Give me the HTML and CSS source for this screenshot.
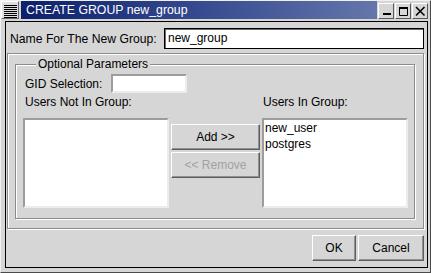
FILE: index.html
```html
<!DOCTYPE html>
<html>
<head>
<meta charset="utf-8">
<title>CREATE GROUP new_group</title>
<link rel="stylesheet" href="styles.css">
</head>
<body>
<div class="window">
  <div class="titlebar">
    <div class="menu-btn">
      <svg width="16" height="16" viewBox="0 0 16 16">
        <g stroke="#000" stroke-width="1">
          <line x1="2" y1="3.5" x2="15" y2="3.5"/>
          <line x1="2" y1="5.5" x2="15" y2="5.5"/>
          <line x1="2" y1="7.5" x2="15" y2="7.5"/>
          <line x1="2" y1="9.5" x2="15" y2="9.5"/>
          <line x1="2" y1="11.5" x2="15" y2="11.5"/>
          <line x1="2" y1="13.5" x2="15" y2="13.5"/>
          <line x1="2" y1="15.5" x2="15" y2="15.5"/>
        </g>
      </svg>
    </div>
    <div class="title">CREATE GROUP new_group</div>
    <div class="wbtns">
      <div class="wbtn">
        <svg width="14" height="14" viewBox="0 0 14 14"><rect x="4" y="9" width="8" height="2" fill="#000"/></svg>
      </div>
      <div class="wbtn">
        <svg width="14" height="14" viewBox="0 0 14 14"><path d="M3.5 3.5h8v8h-8z" fill="none" stroke="#000"/><rect x="3" y="3" width="9" height="2" fill="#000"/></svg>
      </div>
      <div class="wbtn">
        <svg width="14" height="14" viewBox="0 0 14 14"><path d="M3 3L11.5 11.5M11.5 3L3 11.5" stroke="#000" stroke-width="1.6"/></svg>
      </div>
    </div>
  </div>
  <div class="client">
    <div class="name-row">
      <span class="name-label">Name For The New Group:</span>
      <div class="entry name-entry">new_group</div>
    </div>
    <div class="main-box">
      <div class="frame">
        <div class="legend">Optional Parameters</div>
        <div class="gid-row">
          <span class="gid-label">GID Selection:</span>
          <div class="entry gid-entry"></div>
        </div>
        <div class="lists">
          <div class="col-label left-label">Users Not In Group:</div>
          <div></div>
          <div class="col-label right-label">Users In Group:</div>
          <div class="list"></div>
          <div class="mid">
            <div class="btn">Add &gt;&gt;</div>
            <div class="btn disabled">&lt;&lt; Remove</div>
          </div>
          <div class="list">
            <div class="item">new_user</div>
            <div class="item">postgres</div>
          </div>
        </div>
      </div>
    </div>
    <div class="action-area">
      <div class="btn ok">OK</div>
      <div class="btn cancel">Cancel</div>
    </div>
  </div>
</div>
</body>
</html>
```
FILE: styles.css
```css
* { box-sizing: border-box; }
html, body { margin: 0; padding: 0; }
body {
  width: 431px;
  height: 273px;
  overflow: hidden;
  background: #d6d6d6;
  font-family: "Liberation Sans", Arial, sans-serif;
  font-size: 12px;
  line-height: 14px;
  color: #000;
}
.window {
  width: 431px;
  height: 273px;
  display: flex;
  flex-direction: column;
  background: #d6d6d6;
  border: 1px solid;
  border-color: #f0f0f0 #4a4a4a #4a4a4a #f0f0f0;
}
.titlebar {
  height: 18px;
  display: flex;
  margin-right: 2px;
  flex: none;
}
.menu-btn {
  width: 18px;
  height: 18px;
  background: #dedede;
  border: 1px solid;
  border-color: #ffffff #6a6a6a #6a6a6a #ffffff;
  display: flex;
}
.title {
  flex: 1;
  margin-left: 2px;
  margin-right: 1px;
  background: linear-gradient(90deg, #0b1f6c 0%, #3a4f92 55%, #6476ab 100%);
  color: #fff;
  padding-left: 5px;
  padding-top: 2px;
  font-size: 12.3px;
  white-space: nowrap;
}
.wbtns {
  display: flex;
  gap: 1px;
  padding-top: 2px;
}
.wbtn {
  width: 16px;
  height: 16px;
  border: 1px solid;
  border-color: #ffffff #5a5a5a #5a5a5a #ffffff;
  background: #d6d6d6;
  display: flex;
}
.client {
  flex: 1;
  margin: 2px 2px 4px 4px;
  border: 1px solid #000;
  display: flex;
  flex-direction: column;
}
.name-row {
  height: 31px;
  flex: none;
  display: flex;
  align-items: center;
  padding: 6px 3px 4px 4px;
}
.name-label { flex: 1; white-space: nowrap; font-size: 12.2px; }
.entry { background: #fff; white-space: nowrap; }
.name-entry {
  width: 260px;
  height: 21px;
  border: 1px solid #000;
  box-shadow: inset 1px 1px 0 #6a6a6a;
  padding: 0 3px;
  line-height: 19px;
}
.main-box {
  height: 176px;
  flex: none;
  margin: 0 3px 0 1px;
  border: 1px solid #8c8c8c;
  box-shadow: inset 1px 1px 0 #fff, 1px 1px 0 #fff;
  padding: 10px 8px 9px 7px;
}
.frame {
  height: 155px;
  border: 1px solid #8c8c8c;
  box-shadow: inset 1px 1px 0 #fff, 1px 1px 0 #fff;
  padding: 0 6px 10px 7px;
}
.legend {
  width: max-content;
  margin: -8px 0 0 13px;
  padding: 0 2px;
  background: #d6d6d6;
  line-height: 14px;
  white-space: nowrap;
}
.gid-row {
  margin-top: 3px;
  height: 19px;
  display: flex;
  align-items: center;
}
.gid-label { width: 88px; padding-left: 2px; white-space: nowrap; }
.gid-entry {
  width: 76px;
  height: 19px;
  border: 2px solid;
  border-color: #9c9c9c #ececec #ececec #9c9c9c;
}
.lists {
  margin-top: 2px;
  display: grid;
  grid-template-columns: 146px 89px 146px;
  column-gap: 2px;
  row-gap: 9px;
}
.col-label { height: 14px; white-space: nowrap; }
.left-label { padding-left: 2px; }
.right-label { padding-left: 1px; }
.list {
  height: 90px;
  background: #fff;
  border: 2px solid;
  border-color: #9c9c9c #ececec #ececec #9c9c9c;
  padding-left: 1px;
}
.item { line-height: 16px; }
.mid {
  padding-top: 6px;
  display: flex;
  flex-direction: column;
  gap: 2px;
}
.btn {
  height: 26px;
  border: 1px solid;
  border-color: #ffffff #5e5e5e #5e5e5e #ffffff;
  box-shadow: inset -1px -1px 0 #909090;
  background: #d6d6d6;
  display: flex;
  align-items: center;
  justify-content: center;
  white-space: nowrap;
}
.btn.disabled { color: #a2a2a2; }
.action-area {
  flex: 1;
  display: flex;
  justify-content: flex-end;
  align-items: flex-start;
  padding: 6px 3px 0 0;
  gap: 2px;
}
.ok { width: 44px; }
.cancel { width: 66px; }
```
